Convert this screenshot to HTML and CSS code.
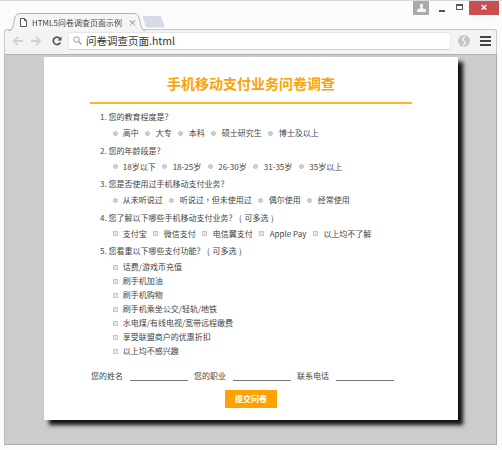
FILE: index.html
```html
<!DOCTYPE html>
<html lang="zh-CN">
<head>
    <meta charset="UTF-8">
    <title>HTML5问卷调查页面示例</title>
    <link rel="stylesheet" href="styles.css">
</head>
<body>

<div class="window">
    <div class="titlebar">
        <div class="tab">
            <svg class="tab-shape" width="138" height="18" viewBox="0 0 138 18">
                <path d="M0 18C3 18 4 16 5 13L7 4C8 1.500 9.500 .5 12 .5H126C128.500 .5 130 1.500 131 4L133 13C134 16 135 18 138 18" fill="#f5f5f5" stroke="#b4b4b4"/>
            </svg>
            <svg class="tab-icon" width="7" height="9" viewBox="0 0 7 9">
                <path d="M.5 .5H4.500L6.500 2.500V8.500H.5Z M4.500 .5V2.500H6.500" fill="#fff" stroke="#555" stroke-width="1"/>
            </svg>
            <span class="tab-title">HTML5问卷调查页面示例</span>
            <span class="tab-close">×</span>
        </div>
        <svg class="new-tab" width="22" height="12" viewBox="0 0 22 12">
            <path d="M0 1C0 .5 .5 0 1 0H16C17 0 18 .5 18 1.500L21.500 11H3.500Z" fill="#d6dce6" stroke="#c5cad2" stroke-width=".5"/>
        </svg>
        <div class="user-btn">
            <svg width="9" height="8" viewBox="0 0 9 8"><path d="M3 0H6V3L5.500 4 9 5.500V8H0V5.500L3.500 4 3 3Z" fill="#f4f4f4"/></svg>
        </div>
        <div class="win-btn"><span class="min-icon"></span></div>
        <div class="win-btn"><span class="max-icon"></span></div>
        <div class="close-btn">×</div>
    </div>

    <div class="toolbar">
        <svg class="nav-back" width="11" height="10" viewBox="0 0 11 10"><path d="M11 5H2M6 1L2 5l4 4" fill="none" stroke="#d2d2d2" stroke-width="2"/></svg>
        <svg class="nav-forward" width="11" height="10" viewBox="0 0 11 10"><path d="M0 5H9M5 1l4 4-4 4" fill="none" stroke="#d2d2d2" stroke-width="2"/></svg>
        <svg class="nav-reload" width="10" height="10" viewBox="0 0 10 10"><path d="M8.300 6.500A3.700 3.700 0 1 1 7.800 2.400" fill="none" stroke="#555" stroke-width="1.700"/><path d="M9.500 .5V4.500H5.500Z" fill="#555"/></svg>
        <div class="address">
            <svg width="9" height="9" viewBox="0 0 9 9"><circle cx="3.500" cy="3.500" r="2.700" fill="none" stroke="#999"/><path d="M5.500 5.500L8.500 8.500" stroke="#999" stroke-width="1.300"/></svg>
            <span>问卷调查页面.html</span>
        </div>
        <svg class="ext-icon" width="12" height="12" viewBox="0 0 12 12">
            <circle cx="6" cy="6" r="6" fill="#c6c6c6"/>
            <path d="M7 1.500C4 3 4.500 5 6 6S8 9 5 10.500" fill="none" stroke="#f0f0f0" stroke-width="1.500"/>
        </svg>
        <div class="menu-icon"><i></i><i></i><i></i></div>
    </div>

    <div class="viewport">
        <form class="card">
            <h1>手机移动支付业务问卷调查</h1>

            <div class="question">1. 您的教育程度是<span class="fw">？</span></div>
            <div class="options">
                <label><i class="radio"></i>高中</label>
                <label><i class="radio"></i>大专</label>
                <label><i class="radio"></i>本科</label>
                <label><i class="radio"></i>硕士研究生</label>
                <label><i class="radio"></i>博士及以上</label>
            </div>

            <div class="question">2. 您的年龄段是<span class="fw">？</span></div>
            <div class="options">
                <label><i class="radio"></i>18岁以下</label>
                <label><i class="radio"></i>18-25岁</label>
                <label><i class="radio"></i>26-30岁</label>
                <label><i class="radio"></i>31-35岁</label>
                <label><i class="radio"></i>35岁以上</label>
            </div>

            <div class="question">3. 您是否使用过手机移动支付业务<span class="fw">？</span></div>
            <div class="options">
                <label><i class="radio"></i>从未听说过</label>
                <label><i class="radio"></i>听说过<span class="fw">，</span>但未使用过</label>
                <label><i class="radio"></i>偶尔使用</label>
                <label><i class="radio"></i>经常使用</label>
            </div>

            <div class="question">4. 您了解以下哪些手机移动支付业务<span class="fw">？</span><span class="paren">(</span>可多选<span class="paren">)</span></div>
            <div class="options">
                <label><i class="check"></i>支付宝</label>
                <label><i class="check"></i>微信支付</label>
                <label><i class="check"></i>电信翼支付</label>
                <label><i class="check"></i>Apple Pay</label>
                <label><i class="check"></i>以上均不了解</label>
            </div>

            <div class="question">5. 您看重以下哪些支付功能<span class="fw">？</span><span class="paren">(</span>可多选<span class="paren">)</span></div>
            <div class="options-col">
                <label><i class="check"></i>话费/游戏币充值</label>
                <label><i class="check"></i>刷手机加油</label>
                <label><i class="check"></i>刷手机购物</label>
                <label><i class="check"></i>刷手机乘坐公交/轻轨/地铁</label>
                <label><i class="check"></i>水电煤/有线电视/宽带远程缴费</label>
                <label><i class="check"></i>享受联盟商户的优惠折扣</label>
                <label><i class="check"></i>以上均不感兴趣</label>
            </div>

            <div class="contact">
                <span>您的姓名</span><i class="blank"></i>
                <span>您的职业</span><i class="blank"></i>
                <span>联系电话</span><i class="blank"></i>
            </div>

            <div class="submit">提交问卷</div>
        </form>
    </div>
</div>

</body>
</html>
```

FILE: styles.css
```css
* {
    box-sizing: border-box;
}
html, body {
    margin: 0;
    padding: 0;
}
body {
    width: 502px;
    height: 450px;
    overflow: hidden;
    font-family: "Noto Sans CJK SC", "Liberation Sans", sans-serif;
    background-color: #fbfbfb;
}
i {
    font-style: normal;
}
.window {
    display: flex;
    flex-direction: column;
    height: 450px;
    padding: 0 5px 5px 4px;
    border-top: 1px solid #d8d8d8;
    filter: blur(0.3px);
}
.titlebar {
    display: flex;
    align-items: flex-start;
    height: 28px;
}
.tab {
    position: relative;
    display: flex;
    align-items: center;
    width: 138px;
    height: 18px;
    margin-top: 12px;
    margin-left: 4px;
    padding-left: 12px;
    font-size: 8px;
    color: #444;
}
.tab-shape {
    position: absolute;
    left: 0;
    top: 0;
}
.tab-icon, .tab-title, .tab-close {
    position: relative;
}
.tab-title {
    margin-left: 5px;
    width: 96px;
}
.tab-close {
    color: #777;
    font-size: 9px;
}
.new-tab {
    margin-top: 15px;
    margin-left: -3px;
}
.user-btn {
    display: flex;
    align-items: center;
    justify-content: center;
    width: 16px;
    height: 14px;
    margin-left: auto;
    background-color: #aaa;
}
.win-btn {
    display: flex;
    align-items: center;
    justify-content: center;
    width: 20px;
    height: 14px;
}
.min-icon {
    width: 6px;
    height: 2px;
    margin-top: 6px;
    margin-left: 6px;
    background-color: #555;
}
.max-icon {
    width: 7px;
    height: 6px;
    margin-top: -3px;
    border: 1px solid #555;
    border-top-width: 2px;
}
.close-btn {
    width: 30px;
    height: 14px;
    margin-right: -2px;
    background-color: #c75050;
    color: #fff;
    font-family: "Liberation Sans", sans-serif;
    font-size: 11px;
    font-weight: bold;
    line-height: 13px;
    text-align: center;
}
.toolbar {
    display: flex;
    align-items: center;
    height: 26px;
    padding: 0 0 3px 7px;
    background-color: #f3f3f3;
    border: 1px solid #c8c8c8;
    border-bottom-color: #b0b0b0;
    border-radius: 3px 3px 0 0;
}
.nav-forward {
    margin-left: 8px;
}
.nav-reload {
    margin-left: 10px;
}
.address {
    display: flex;
    align-items: center;
    gap: 4px;
    width: 383px;
    height: 18px;
    margin-left: 6px;
    padding-left: 4px;
    background-color: #fff;
    border: 1px solid #e6e6e6;
    border-bottom-color: #d4d4d4;
    border-radius: 2px;
    font-size: 10.500px;
    color: #333;
}
.ext-icon {
    margin-left: 7px;
}
.menu-icon {
    display: flex;
    flex-direction: column;
    gap: 2px;
    width: 11px;
    margin-left: 10px;
}
.menu-icon i {
    height: 2px;
    background-color: #444;
}
.viewport {
    flex: 1;
    padding: 2px 38px 0 39px;
    background-color: #ccc;
    border-left: 1px solid #bbb;
    border-right: 1px solid #a8a8a8;
    border-bottom: 1px solid #a8a8a8;
}
.card {
    height: 363px;
    padding: 0 46px;
    background-color: #fff;
    color: #444;
    font-size: 8px;
    box-shadow: 5px 5px 4px #111;
}
h1 {
    margin: 0 0 6.300px 0;
    padding-top: 15.500px;
    height: 47px;
    border-bottom: 2px solid #ffb429;
    color: #ffa200;
    font-size: 14px;
    line-height: 20px;
    font-weight: bold;
    text-align: center;
}
.question {
    height: 16px;
    padding-left: 10px;
    line-height: 14px;
}
/* full-width punctuation sits centred in its cell */
.fw {
    font-family: "Noto Sans CJK TC", sans-serif;
}
.paren {
    display: inline-block;
    width: 8px;
    text-align: center;
}
.options {
    display: flex;
    height: 17.500px;
    padding-left: 22.500px;
    line-height: 14px;
    gap: 6.700px;
}
.options label, .options-col label {
    display: flex;
    align-items: flex-start;
}
.radio {
    width: 5px;
    height: 5px;
    margin: 4.500px 5.300px 0 0;
    border-radius: 50%;
    background-color: #d0d0d0;
    border: 1px solid #c0c0c0;
}
.check {
    width: 5px;
    height: 5px;
    margin: 4.500px 5.300px 0 0;
    background-color: #e6e6e6;
    border: 1px solid #c8c8c8;
}
.options-col {
    padding-left: 22.500px;
}
.options-col label {
    height: 14px;
    line-height: 14px;
}
.contact {
    display: flex;
    align-items: center;
    height: 14px;
    margin-top: 10.700px;
    padding-left: 1px;
}
.blank {
    width: 58px;
    height: 11px;
    margin: 0 6px 0 7px;
    border-bottom: 1px solid #777;
}
.submit {
    width: 52px;
    height: 18px;
    margin: 7px auto 0 auto;
    background-color: #ffa200;
    color: #fff;
    font-weight: bold;
    line-height: 18px;
    text-align: center;
}
```
